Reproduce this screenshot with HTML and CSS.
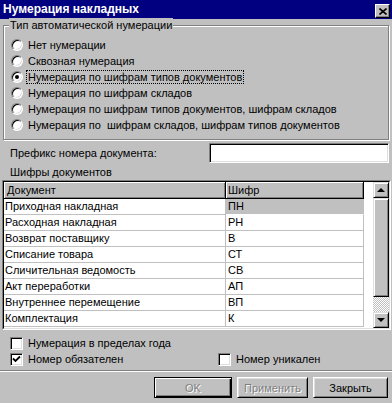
FILE: index.html
```html
<!DOCTYPE html>
<html lang="ru">
<head>
    <meta charset="UTF-8">
    <title>Нумерация накладных</title>
    <link rel="stylesheet" href="styles.css">
</head>
<body>
    <div class="window">
        <div class="titlebar">
            <span class="title">Нумерация накладных</span>
            <span class="close-btn">
                <svg width="8" height="7" viewBox="0 0 8 7">
                    <path d="M0.5 0.5 L7.5 6.5 M7.5 0.5 L0.5 6.5" stroke="#000" stroke-width="1.6"/>
                </svg>
            </span>
        </div>

        <div class="group">
            <span class="legend">Тип автоматической нумерации</span>
            <div class="option"><span class="radio"></span><span class="opt-label">Нет нумерации</span></div>
            <div class="option"><span class="radio"></span><span class="opt-label">Сквозная нумерация</span></div>
            <div class="option"><span class="radio checked"></span><span class="opt-label focused">Нумерация по шифрам типов документов</span></div>
            <div class="option"><span class="radio"></span><span class="opt-label">Нумерация по шифрам складов</span></div>
            <div class="option"><span class="radio"></span><span class="opt-label">Нумерация по шифрам типов документов, шифрам складов</span></div>
            <div class="option"><span class="radio"></span><span class="opt-label">Нумерация по&nbsp; шифрам складов, шифрам типов документов</span></div>
        </div>

        <div class="prefix-row">
            <span>Префикс номера документа:</span>
            <span class="textbox"></span>
        </div>

        <div class="section-label">Шифры документов</div>

        <div class="grid">
            <div class="grid-inner">
                <div class="grid-body">
                    <div class="grid-row header">
                        <div class="cell doc">Документ</div>
                        <div class="cell code">Шифр</div>
                    </div>
                    <div class="grid-row">
                        <div class="cell doc">Приходная накладная</div>
                        <div class="cell code current">ПН</div>
                    </div>
                    <div class="grid-row">
                        <div class="cell doc">Расходная накладная</div>
                        <div class="cell code">РН</div>
                    </div>
                    <div class="grid-row">
                        <div class="cell doc">Возврат поставщику</div>
                        <div class="cell code">В</div>
                    </div>
                    <div class="grid-row">
                        <div class="cell doc">Списание товара</div>
                        <div class="cell code">СТ</div>
                    </div>
                    <div class="grid-row">
                        <div class="cell doc">Сличительная ведомость</div>
                        <div class="cell code">СВ</div>
                    </div>
                    <div class="grid-row">
                        <div class="cell doc">Акт переработки</div>
                        <div class="cell code">АП</div>
                    </div>
                    <div class="grid-row">
                        <div class="cell doc">Внутреннее перемещение</div>
                        <div class="cell code">ВП</div>
                    </div>
                    <div class="grid-row">
                        <div class="cell doc">Комплектация</div>
                        <div class="cell code">К</div>
                    </div>
                </div>
                <div class="scrollbar">
                    <div class="sb-btn"><span class="arrow up"></span></div>
                    <div class="sb-thumb"></div>
                    <div class="sb-track"></div>
                    <div class="sb-btn"><span class="arrow down"></span></div>
                </div>
            </div>
        </div>

        <div class="checks">
            <div class="check-item wide"><span class="checkbox"></span><span>Нумерация в пределах года</span></div>
            <div class="check-item"><span class="checkbox">
                <svg width="9" height="9" viewBox="0 0 9 9">
                    <path d="M1 3.5 L3.5 6 L8 1.5" fill="none" stroke="#000" stroke-width="1.8"/>
                </svg>
            </span><span>Номер обязателен</span></div>
            <div class="check-item"><span class="checkbox"></span><span>Номер уникален</span></div>
        </div>

        <div class="separator"></div>

        <div class="buttons">
            <span class="btn default disabled ok">OK</span>
            <span class="btn disabled apply">Применить</span>
            <span class="btn close">Закрыть</span>
        </div>
    </div>
</body>
</html>
```

FILE: styles.css
```css
body {
    margin: 0;
    background-color: #c0c0c0;
    font-family: 'Liberation Sans', Arial, sans-serif;
    font-size: 11px;
    color: #000;
}

.window {
    width: 392px;
    height: 403px;
    background-color: #c0c0c0;
    overflow: hidden;
}

/* title bar */
.titlebar {
    height: 19px;
    background-color: #000080;
    color: #fff;
    display: flex;
    align-items: flex-start;
    justify-content: space-between;
}

.title {
    font-weight: bold;
    font-size: 12px;
    line-height: 19px;
    padding-left: 3px;
}

.close-btn {
    box-sizing: border-box;
    width: 15px;
    height: 14px;
    margin: 4px 2px 0 0;
    background-color: #c0c0c0;
    border: 1px solid;
    border-color: #fff #000 #000 #fff;
    box-shadow: inset -1px -1px #808080;
    display: flex;
    align-items: center;
    justify-content: center;
}

/* group box */
.group {
    position: relative;
    box-sizing: border-box;
    height: 115px;
    margin: 6px 3px 0 3px;
    padding: 11px 0 0 7px;
    border: 1px solid #808080;
    box-shadow: inset 1px 1px #fff, 1px 1px #fff;
}

.legend {
    position: absolute;
    left: 5px;
    top: -8px;
    padding: 0 1px;
    line-height: 14px;
    background-color: #c0c0c0;
}

.option {
    display: flex;
    align-items: center;
    height: 16px;
}

.radio {
    box-sizing: border-box;
    width: 12px;
    height: 12px;
    border-radius: 50%;
    background-color: #fff;
    border: 1px solid;
    border-color: #808080 #fff #fff #808080;
    box-shadow: inset 1px 1px #000, inset -1px -1px #dfdfdf;
    display: flex;
    align-items: center;
    justify-content: center;
}

.radio.checked::after {
    content: '';
    width: 4px;
    height: 4px;
    border-radius: 50%;
    background-color: #000;
}

.opt-label {
    margin-left: 3px;
    padding: 0 1px;
    line-height: 12px;
    border: 1px solid transparent;
}

.opt-label.focused {
    border: 1px dotted #000;
}

/* prefix */
.prefix-row {
    display: flex;
    align-items: center;
    justify-content: space-between;
    height: 20px;
    margin: 3px 3px 0 10px;
}

.textbox {
    box-sizing: border-box;
    width: 180px;
    height: 20px;
    background-color: #fff;
    border: 1px solid;
    border-color: #808080 #fff #fff #808080;
    box-shadow: inset 1px 1px #000, inset -1px -1px #dfdfdf;
}

.section-label {
    margin: 2px 0 0 10px;
    line-height: 14px;
}

/* grid */
.grid {
    box-sizing: border-box;
    height: 150px;
    margin: 1px 1px 0 2px;
    border: 1px solid;
    border-color: #808080 #fff #fff #808080;
}

.grid-inner {
    height: 100%;
    box-sizing: border-box;
    border: 1px solid;
    border-color: #000 #dfdfdf #dfdfdf #000;
    background-color: #fff;
    display: flex;
}

.grid-body {
    flex: 1;
}

.grid-row {
    display: flex;
    height: 16px;
}

.cell {
    box-sizing: border-box;
    height: 16px;
    line-height: 15px;
    padding-left: 1px;
    border-right: 1px solid #c0c0c0;
    border-bottom: 1px solid #c0c0c0;
    white-space: nowrap;
}

.cell.doc {
    width: 222px;
}

.cell.code {
    width: 138px;
    padding-left: 2px;
}

.cell.current {
    background-color: #c0c0c0;
    border-bottom-color: #fff;
}

.grid-row.header {
    height: 17px;
}

.header .cell {
    height: 17px;
    line-height: 16px;
    padding-left: 3px;
    background-color: #c0c0c0;
    border-right: 1px solid #000;
    border-bottom: 1px solid #000;
    box-shadow: inset 1px 1px #fff, inset -1px -1px #808080;
}

.header .cell.code {
    padding-left: 2px;
}

/* scrollbar */
.scrollbar {
    width: 16px;
    display: flex;
    flex-direction: column;
}

.sb-btn,
.sb-thumb {
    box-sizing: border-box;
    background-color: #c0c0c0;
    border: 1px solid;
    border-color: #dfdfdf #000 #000 #dfdfdf;
    box-shadow: inset 1px 1px #fff, inset -1px -1px #808080;
}

.sb-btn {
    height: 16px;
    display: flex;
    align-items: center;
    justify-content: center;
}

.sb-thumb {
    height: 99px;
}

.sb-track {
    flex: 1;
    background-color: #fff;
    background-image: repeating-conic-gradient(#c0c0c0 0 25%, #fff 0 50%);
    background-size: 2px 2px;
}

.arrow {
    width: 0;
    height: 0;
    border-left: 4px solid transparent;
    border-right: 4px solid transparent;
}

.arrow.up {
    border-bottom: 4px solid #000;
}

.arrow.down {
    border-top: 4px solid #000;
}

/* checkboxes */
.checks {
    display: grid;
    grid-template-columns: 208px auto;
    margin: 5px 0 0 10px;
}

.check-item {
    display: flex;
    align-items: center;
    height: 16px;
}

.check-item.wide {
    grid-column: 1 / 3;
}

.checkbox {
    box-sizing: border-box;
    width: 13px;
    height: 13px;
    margin-right: 5px;
    background-color: #fff;
    border: 1px solid;
    border-color: #808080 #fff #fff #808080;
    box-shadow: inset 1px 1px #000, inset -1px -1px #dfdfdf;
    display: flex;
    align-items: center;
    justify-content: center;
}

.separator {
    margin-top: 3px;
    border-top: 1px solid #808080;
    border-bottom: 1px solid #fff;
}

/* buttons */
.buttons {
    display: flex;
    justify-content: flex-end;
    gap: 5px;
    margin-top: 5px;
    padding-right: 4px;
}

.btn {
    box-sizing: border-box;
    height: 21px;
    display: flex;
    align-items: center;
    justify-content: center;
    background-color: #c0c0c0;
    border: 1px solid;
    border-color: #fff #000 #000 #fff;
    box-shadow: inset 1px 1px #dfdfdf, inset -1px -1px #808080;
}

.btn.default {
    border-color: #000;
    box-shadow: inset 1px 1px #fff, inset -1px -1px #000, inset -2px -2px #808080;
}

.btn.disabled {
    color: #808080;
    text-shadow: 1px 1px #fff;
}

.btn.ok {
    width: 78px;
}

.btn.apply {
    width: 71px;
}

.btn.close {
    width: 75px;
}
```
